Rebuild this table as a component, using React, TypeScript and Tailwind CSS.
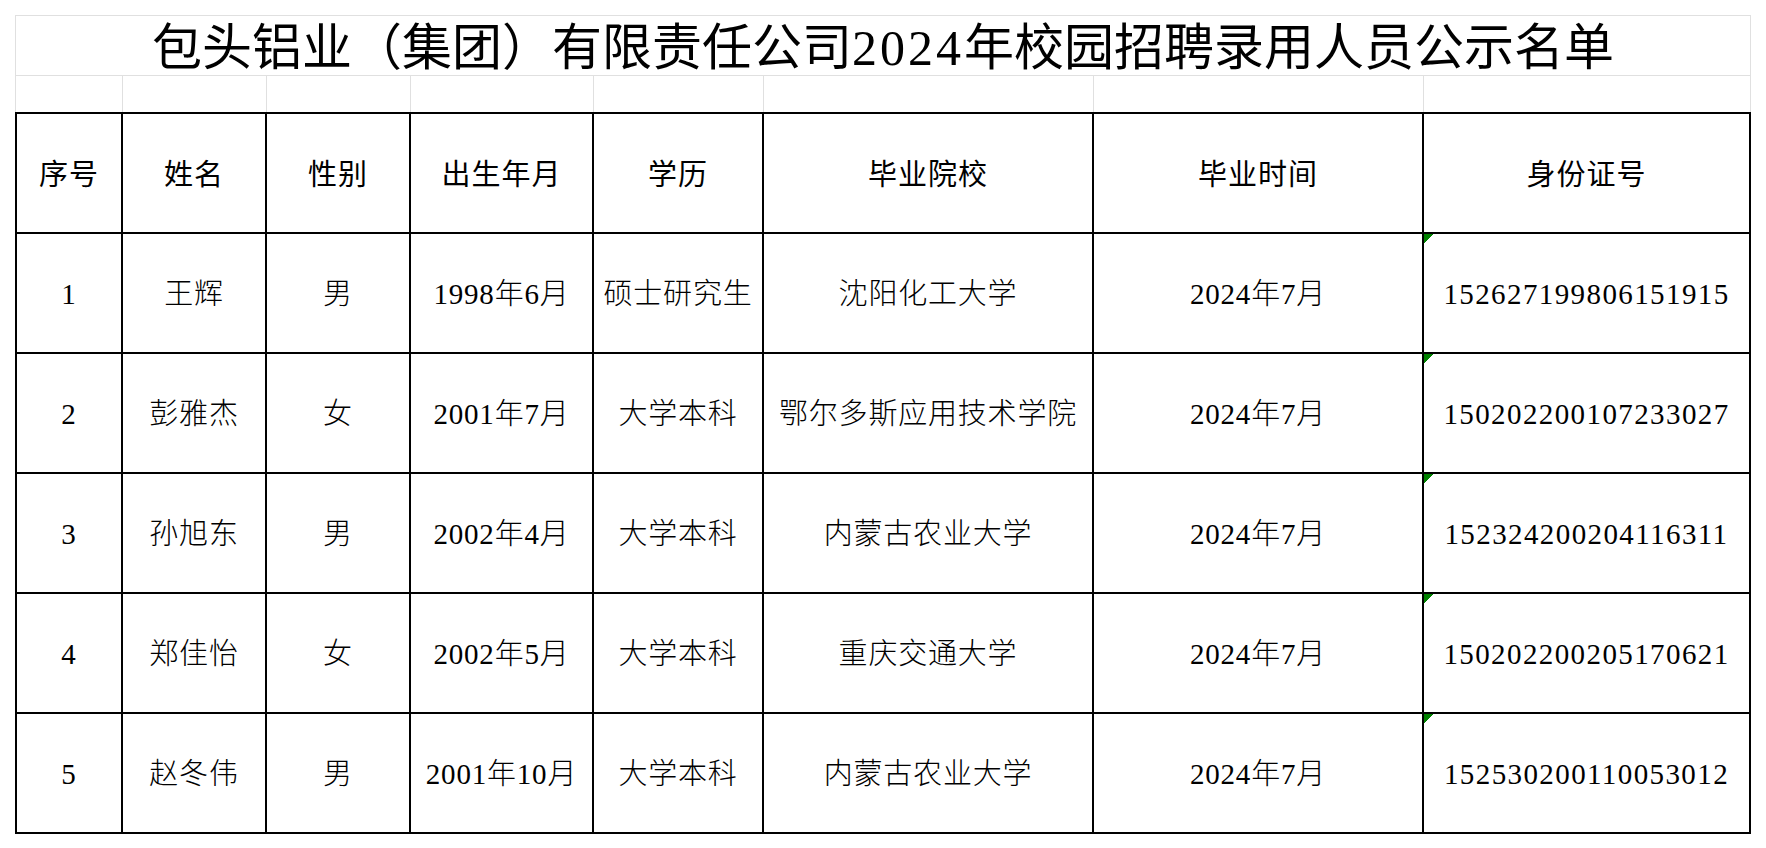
import React from 'react';

type Person = {
  no: string;
  name: string;
  gender: string;
  birth: string;
  degree: string;
  school: string;
  grad: string;
  id: string;
};

const people: Person[] = [
  { no: '1', name: '王辉', gender: '男', birth: '1998年6月', degree: '硕士研究生', school: '沈阳化工大学', grad: '2024年7月', id: '152627199806151915' },
  { no: '2', name: '彭雅杰', gender: '女', birth: '2001年7月', degree: '大学本科', school: '鄂尔多斯应用技术学院', grad: '2024年7月', id: '150202200107233027' },
  { no: '3', name: '孙旭东', gender: '男', birth: '2002年4月', degree: '大学本科', school: '内蒙古农业大学', grad: '2024年7月', id: '152324200204116311' },
  { no: '4', name: '郑佳怡', gender: '女', birth: '2002年5月', degree: '大学本科', school: '重庆交通大学', grad: '2024年7月', id: '150202200205170621' },
  { no: '5', name: '赵冬伟', gender: '男', birth: '2001年10月', degree: '大学本科', school: '内蒙古农业大学', grad: '2024年7月', id: '152530200110053012' },
];

const headers = ['序号', '姓名', '性别', '出生年月', '学历', '毕业院校', '毕业时间', '身份证号'];

// column widths, each one includes its own right border
const cols = 'grid-cols-[106px_144px_144px_183px_170px_330px_330px_327px]';

const font = { fontFamily: '"Liberation Serif", "Noto Sans CJK SC", serif' };

const App: React.FC = () => {
  return (
    <div className="min-h-screen bg-white pt-[15px] pl-[15px] text-black" style={font}>
      <div className="w-[1736px]">
        {/* title row */}
        <div className="flex h-[61px] items-center justify-center border border-[#e0e0e0] pt-[4px] text-[50px] leading-none">
          包头铝业（集团）有限责任公司<span className="tracking-[3px]">2024</span>年校园招聘录用人员公示名单
        </div>

        {/* empty spacer row with sheet gridlines */}
        <div className={`grid ${cols} h-[36px] border-l border-[#e0e0e0] pl-px`}>
          {headers.map((h) => (
            <div key={h} className="border-r border-[#e0e0e0]" />
          ))}
        </div>

        {/* the table itself */}
        <div className={`grid ${cols} border-t-2 border-l-2 border-black`}>
          {headers.map((h) => (
            <div
              key={h}
              className="flex h-[120px] items-center justify-center border-r-2 border-b-2 border-black pt-[6px] text-[29px] tracking-[1px]"
            >
              {h}
            </div>
          ))}

          {people.map((p) => {
            const cells = [p.no, p.name, p.gender, p.birth, p.degree, p.school, p.grad, p.id];
            return cells.map((c, i) => (
              <div
                key={p.no + '-' + i}
                className={`relative flex h-[120px] items-center justify-center whitespace-nowrap border-r-2 border-b-2 border-black pt-[4px] text-[29px] font-light ${
                  i === 7 ? 'tracking-[1.4px]' : 'tracking-[0.8px]'
                }`}
              >
                {i === 7 && (
                  <svg className="absolute top-0 left-0" width="9" height="9" viewBox="0 0 9 9">
                    <path d="M0 0H9V1H8V2H7V3H6V4H5V5H4V6H3V7H2V8H1V9H0Z" fill="#008000" />
                  </svg>
                )}
                {c}
              </div>
            ));
          })}
        </div>
      </div>
    </div>
  );
};

export default App;
